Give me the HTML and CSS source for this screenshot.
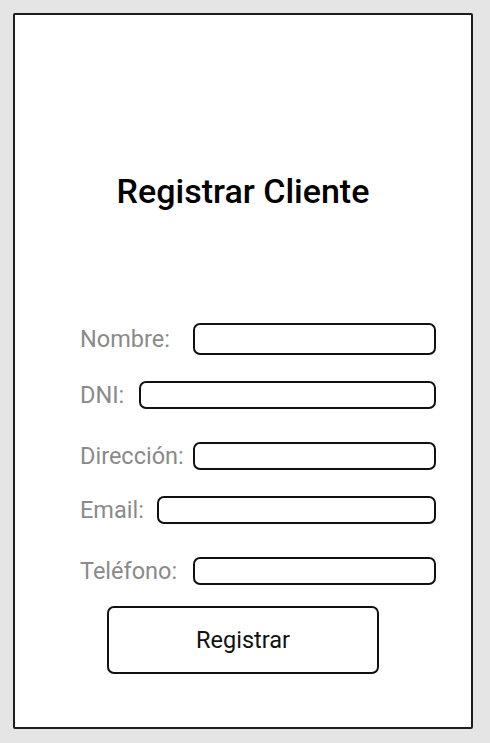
FILE: index.html
```html
<!DOCTYPE html>
<html lang="es">
<head>
<meta charset="utf-8">
<title>Registrar Cliente</title>
<link rel="stylesheet" href="styles.css">
</head>
<body>
<main class="card">
  <h1 class="title">Registrar Cliente</h1>
  <form class="form">
    <div class="row row--first">
      <label class="label label--nombre" for="nombre">Nombre:</label>
      <input class="input" id="nombre" type="text">
    </div>
    <div class="row row--near">
      <label class="label label--dni" for="dni">DNI:</label>
      <input class="input" id="dni" type="text">
    </div>
    <div class="row row--far">
      <label class="label label--dir" for="dir">Dirección:</label>
      <input class="input" id="dir" type="text">
    </div>
    <div class="row row--near">
      <label class="label label--email" for="email">Email:</label>
      <input class="input" id="email" type="text">
    </div>
    <div class="row row--far">
      <label class="label label--tel" for="tel">Teléfono:</label>
      <input class="input" id="tel" type="text">
    </div>
    <button class="button" type="button">Registrar</button>
  </form>
</main>
</body>
</html>
```
FILE: styles.css
```css
* { box-sizing: border-box; }
html, body { margin: 0; padding: 0; }
body {
  background: #e5e5e5;
  font-family: Roboto, "Liberation Sans", sans-serif;
  width: 490px;
  height: 743px;
  padding: 13px 17px 14px 13px;
}
.card {
  width: 460px;
  height: 716px;
  background: #fff;
  border: 2px solid #1e1e1e;
  border-radius: 2px;
  padding: 156px 35px 0 65px;
  display: flex;
  flex-direction: column;
}
.title {
  margin: 0;
  font-size: 34px;
  font-weight: 500;
  line-height: 40px;
  height: 40px;
  text-align: center;
  color: #000;
  margin-left: -50px;
  margin-right: -20px;
}
.form {
  margin-top: 112px;
  display: flex;
  flex-direction: column;
}
.row {
  display: flex;
  align-items: center;
  height: 28px;
}
.row--first { height: 32px; }
.row--near { margin-top: 26px; }
.row--far { margin-top: 33px; }
.label {
  font-size: 23.5px;
  color: #8a8a8a;
  line-height: 28px;
  white-space: nowrap;
  flex: none;
}
.label--nombre, .label--dir, .label--tel { width: 113px; }
.label--dni { width: 59px; }
.label--email { width: 77px; }
.input {
  flex: 1;
  height: 100%;
  border: 2px solid #111;
  border-radius: 7px;
  background: #fff;
  margin: 0;
  padding: 0 8px;
  font: inherit;
}
.button {
  margin-top: 21px;
  margin-left: 27px;
  width: 272px;
  height: 68px;
  border: 2px solid #111;
  border-radius: 7px;
  background: #fff;
  font-family: Roboto, "Liberation Sans", sans-serif;
  font-size: 23.5px;
  color: #111;
  padding: 0;
}
```
